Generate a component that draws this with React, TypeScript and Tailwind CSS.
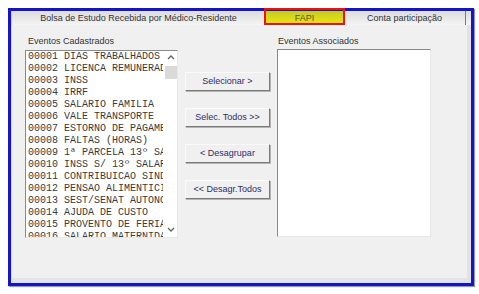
import React from "react";

const rows = [
  "00001 DIAS TRABALHADOS",
  "00002 LICENCA REMUNERADA",
  "00003 INSS",
  "00004 IRRF",
  "00005 SALARIO FAMILIA",
  "00006 VALE TRANSPORTE",
  "00007 ESTORNO DE PAGAMENTO",
  "00008 FALTAS (HORAS)",
  "00009 1ª PARCELA 13º SALARIO",
  "00010 INSS S/ 13º SALARIO",
  "00011 CONTRIBUICAO SINDICAL",
  "00012 PENSAO ALIMENTICIA",
  "00013 SEST/SENAT AUTONOMO",
  "00014 AJUDA DE CUSTO",
  "00015 PROVENTO DE FERIAS",
  "00016 SALARIO MATERNIDADE",
];

function Btn({ label }: { label: string }) {
  return (
    <div className="w-[85px] h-[19px] flex items-center justify-center bg-[#f0f0f0] border border-t-[#fafafa] border-l-[#fafafa] border-r-[#7a7a7a] border-b-[#7a7a7a] shadow-[1px_1px_0_#b4b4b4] text-[9px] text-[#2e2e66] leading-none">
      {label}
    </div>
  );
}

export default function App() {
  return (
    <div className="w-[479px] h-[294px] bg-white pt-[8px] pl-[8px] font-['Liberation_Sans',Arial,sans-serif] text-[9px]">
      <div className="w-[466px] h-[278px] border-[3px] border-[#1414c8] shadow-[1px_1px_1px_#9a9a9a] flex flex-col bg-[#f0f0f0]">
        {/* tab bar */}
        <div className="h-[14px] flex bg-gradient-to-b from-[#dcdcdc] to-[#f4f4f4] border-l border-[#c8c8d0]">
          <div className="w-[254px] flex items-center justify-center text-[#333] border-r border-[#9a9a9a] leading-none">
            Bolsa de Estudo Recebida por Médico-Residente
          </div>
          <div className="relative w-[78px] flex items-center justify-center bg-gradient-to-b from-[#c8c820] to-[#eaea10] text-[#555533] leading-none border-r border-[#a0a070]">
            FAPI
            <div className="absolute left-[-2px] top-[-3px] w-[81px] h-[17px] border-2 border-[#f01010]" />
          </div>
          <div className="w-[122px] flex items-center justify-center text-[#333] border-r border-[#7a7a7a] leading-none">
            Conta participação
          </div>
          <div className="flex-1" />
        </div>
        {/* content */}
        <div className="flex-1 flex items-start pl-[13px] pt-[11px] border-l border-[#d8d8e0] border-r-4 border-r-[#e2e2e2] border-b-[5px] border-b-[#e4e4e4]">
          {/* left column */}
          <div className="flex flex-col">
            <div className="h-[11px] leading-[11px] text-[#333] pl-[3px] mb-[3px]">Eventos Cadastrados</div>
            <div className="w-[153px] h-[188px] flex bg-white border border-t-[#8a8a8a] border-l-[#8a8a8a] border-r-[#e8e8e8] border-b-[#e8e8e8]">
              <div className="w-[137px] overflow-hidden pl-[2px] font-['Liberation_Mono','Courier_New',monospace] text-[10px] leading-[12px] text-[#3a3a3a] whitespace-nowrap">
                {rows.map((r) => (
                  <div key={r} className="h-[12px]">{r}</div>
                ))}
              </div>
              <div className="w-[14px] flex flex-col items-center pt-[4px]">
                <svg width="8" height="5" viewBox="0 0 8 5" className="ml-[2px]">
                  <path d="M1 4 L4 1 L7 4" fill="none" stroke="#606060" strokeWidth="1.3" />
                </svg>
                <div className="mt-[6px] ml-[2px] w-[12px] h-[13px] bg-[#dadada]" />
                <div className="flex-1" />
                <svg width="8" height="5" viewBox="0 0 8 5" className="ml-[2px] mb-[5px]">
                  <path d="M1 1 L4 4 L7 1" fill="none" stroke="#606060" strokeWidth="1.3" />
                </svg>
              </div>
            </div>
          </div>
          {/* buttons */}
          <div className="ml-[7px] mt-[36px] flex flex-col gap-[17px]">
            <Btn label="Selecionar >" />
            <Btn label="Selec. Todos >>" />
            <Btn label="< Desagrupar" />
            <Btn label="<< Desagr.Todos" />
          </div>
          {/* right column */}
          <div className="ml-[7px] flex flex-col">
            <div className="h-[11px] leading-[11px] text-[#333] pl-[1px] mb-[2px]">Eventos Associados</div>
            <div className="w-[154px] h-[188px] bg-white border border-t-[#8a8a8a] border-l-[#8a8a8a] border-r-[#e8e8e8] border-b-[#e8e8e8]" />
          </div>
        </div>
      </div>
    </div>
  );
}
